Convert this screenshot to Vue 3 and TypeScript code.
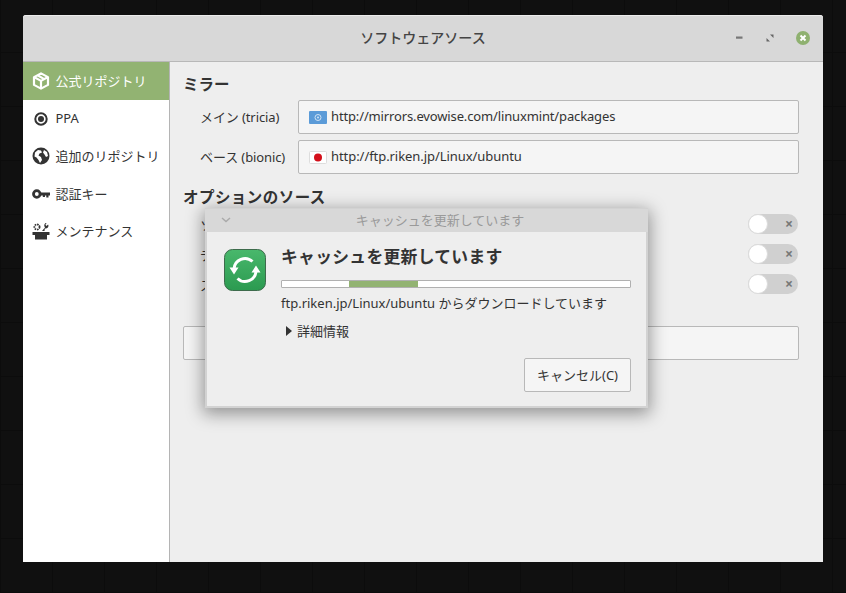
<script setup lang="ts">
const navItems = [
  { label: '公式リポジトリ', icon: 'box' },
  { label: 'PPA', icon: 'ppa' },
  { label: '追加のリポジトリ', icon: 'globe' },
  { label: '認証キー', icon: 'key' },
  { label: 'メンテナンス', icon: 'tools' }
]

const mirrors = [
  { label: 'メイン (tricia)', url: 'http://mirrors.evowise.com/linuxmint/packages', flag: 'un' },
  { label: 'ベース (bionic)', url: 'http://ftp.riken.jp/Linux/ubuntu', flag: 'jp' }
]

// labels run under the dialog, only their first letter shows
const options = ['ソースコード', 'デバッグ', 'ステージング']
</script>

<template>
  <div class="desktop">
    <div class="window">
      <header class="titlebar">
        <span class="title">ソフトウェアソース</span>
        <div class="controls">
          <svg width="10" height="10" viewBox="0 0 10 10"><rect x="2" y="3.500" width="6.500" height="2.200" fill="#777" /></svg>
          <svg width="10" height="10" viewBox="0 0 10 10"><path d="M5 1.500h3.500V5zM1.500 5L5 8.500H1.500z" fill="#666" /></svg>
          <svg width="14" height="14" viewBox="0 0 14 14">
            <circle cx="7" cy="7" r="7" fill="#8fb170" />
            <path d="M4.500 4.500l5 5M9.500 4.500l-5 5" stroke="#fff" stroke-width="2" />
          </svg>
        </div>
      </header>

      <div class="body">
        <nav class="sidebar">
          <div v-for="(item, i) in navItems" :key="item.label" class="nav-item" :class="{ active: i === 0 }">
            <svg class="nav-icon" viewBox="0 0 18 18">
              <g v-if="item.icon === 'box'" fill="none" stroke="currentColor" stroke-width="2.200" stroke-linejoin="round">
                <path d="M9 1.400l7 3.700v7.800l-7 3.700-7-3.700V5.100z" />
                <path d="M2.400 5.300L9 8.900l6.600-3.600M9 8.900v7.400M5.600 3.300l6.600 3.800" />
              </g>
              <g v-else-if="item.icon === 'ppa'">
                <circle cx="9" cy="9" r="5.700" fill="none" stroke="currentColor" stroke-width="2" />
                <circle cx="9" cy="9" r="3" fill="currentColor" />
              </g>
              <g v-else-if="item.icon === 'globe'">
                <circle cx="9" cy="9" r="8.500" fill="currentColor" />
                <path d="M3 5.500l3-2.500 3 .5 1 2-2.500 1-1 2 2.500 1.500 1 3-2 3-1.500-3-2-2.500-2-1zM12 3l3 2 1 4-2 1-1.500-2.500-1.500-2z" fill="#fff" />
              </g>
              <g v-else-if="item.icon === 'key'">
                <circle cx="4.800" cy="9" r="3.300" fill="none" stroke="currentColor" stroke-width="2.800" />
                <path d="M8 7.500h10v3h-1.500v2h-2.200v-2h-1.300v1.500h-2.200v-1.500H8z" fill="currentColor" />
              </g>
              <g v-else>
                <path d="M0.500 10h17v3h-2.500v4.500H3V13H0.500z" fill="currentColor" />
                <circle cx="5" cy="5" r="2.600" fill="none" stroke="currentColor" stroke-width="1.800" stroke-dasharray="1.600 .8" />
                <path d="M10 9l3-3.500a3 3 0 0 1 .6-4.500l1 .1-1.200 1.700 1 1.100 1.700-1.300.4 1.100a3.200 3.200 0 0 1-3.700 2.700L12.500 9z" fill="currentColor" />
              </g>
            </svg>
            <span>{{ item.label }}</span>
          </div>
        </nav>

        <main class="content">
          <h2 class="section-title">ミラー</h2>
          <div v-for="m in mirrors" :key="m.url" class="mirror-row">
            <span class="mirror-label">{{ m.label }}</span>
            <div class="entry">
              <svg v-if="m.flag === 'un'" class="flag" viewBox="0 0 18 13">
                <rect width="18" height="13" rx="1" fill="#5b9bd8" />
                <circle cx="9" cy="6.500" r="3" fill="none" stroke="#cfe2f4" stroke-width="1" />
                <circle cx="9" cy="6.500" r="1" fill="#cfe2f4" />
              </svg>
              <svg v-else class="flag" viewBox="0 0 18 13">
                <rect x=".5" y=".5" width="17" height="12" rx="1" fill="#fff" stroke="#ddd" />
                <circle cx="9" cy="6.500" r="4" fill="#d30f1a" />
              </svg>
              <span class="url" :class="m.flag">{{ m.url }}</span>
            </div>
          </div>

          <h2 class="section-title options-title">オプションのソース</h2>
          <div class="option-list">
            <div v-for="o in options" :key="o" class="option-row">
              <span>{{ o }}</span>
              <div class="toggle">
                <span class="knob"></span>
                <span class="toggle-x">×</span>
              </div>
            </div>
          </div>
          <div class="wide-button"></div>
        </main>
      </div>

      <section class="dialog">
        <div class="dialog-head">
          <svg class="chevron" width="10" height="6" viewBox="0 0 10 6"><path d="M1 1l4 3.500L9 1" fill="none" stroke="#aaa" stroke-width="1.500" /></svg>
          <span>キャッシュを更新しています</span>
        </div>
        <div class="dialog-body">
          <svg class="sync" width="42" height="42" viewBox="0 0 42 42">
            <defs>
              <linearGradient id="syncBg" x1="0" y1="0" x2="0" y2="1">
                <stop offset="0" stop-color="#49b86c" />
                <stop offset="1" stop-color="#2b9a50" />
              </linearGradient>
            </defs>
            <rect x=".5" y=".5" width="41" height="41" rx="8" fill="url(#syncBg)" stroke="#3d6b4c" />
            <path d="M10 20a11 11 0 0 1 18.500-7.500M32 22a11 11 0 0 1-18.500 7.500" fill="none" stroke="#fff" stroke-width="3" />
            <path d="M5.500 18.500h9L10 25.500zM27.500 23.500h9L32 16.500z" fill="#fff" />
          </svg>
          <div class="dialog-main">
            <h3 class="dialog-title">キャッシュを更新しています</h3>
            <div class="progress"><div class="progress-fill"></div></div>
            <p class="dialog-status">ftp.riken.jp/Linux/ubuntu からダウンロードしています</p>
            <div class="details">
              <svg width="6" height="10" viewBox="0 0 6 10"><path d="M0 0l6 5-6 5z" fill="#333" /></svg>
              <span>詳細情報</span>
            </div>
          </div>
        </div>
        <div class="dialog-actions">
          <button class="cancel" type="button"><span>キャンセル(C)</span></button>
        </div>
      </section>
    </div>
  </div>
</template>

<style>
html, body {
  margin: 0;
  background: #101010;
}
</style>

<style scoped>
.desktop {
  width: 846px;
  height: 593px;
  box-sizing: border-box;
  padding: 15px 23px 31px;
  overflow: hidden;
  background-color: #101010;
  background-image:
    repeating-linear-gradient(90deg, #0c0c0c 0 1px, transparent 1px 52px),
    repeating-linear-gradient(0deg, #0c0c0c 0 1px, transparent 1px 54px);
  font-family: "Noto Sans", "Noto Sans CJK JP", sans-serif;
  font-size: 13px;
  color: #333;
}

.window {
  position: relative;
  width: 800px;
  height: 547px;
  display: flex;
  flex-direction: column;
  background: #eeeeee;
  border-radius: 3px 3px 0 0;
}

.titlebar {
  height: 47px;
  flex: none;
  box-sizing: border-box;
  display: flex;
  align-items: center;
  justify-content: center;
  position: relative;
  background: #d8d8d8;
  border-top: 1px solid #ececec;
  border-bottom: 1px solid #b8b8b8;
  border-radius: 3px 3px 0 0;
}

.title {
  font-size: 14px;
  font-weight: 500;
  color: #444;
  margin-top: -3px;
}

.controls {
  position: absolute;
  right: 13px;
  top: 15px;
  display: flex;
  align-items: center;
  gap: 21px;
}

.body {
  flex: 1;
  display: flex;
  min-height: 0;
}

.sidebar {
  width: 147px;
  flex: none;
  box-sizing: border-box;
  background: #fff;
  border-right: 1px solid #b4b4b4;
}

.nav-item {
  height: 37.5px;
  display: flex;
  align-items: center;
  gap: 6px;
  padding-left: 9px;
  color: #333;
}

.nav-item.active {
  height: 38px;
  background: #92b372;
  color: #fff;
}

.nav-item span {
  margin-top: -1px;
}

.nav-icon {
  width: 18px;
  height: 18px;
  flex: none;
  margin-left: -0.5px;
}

.content {
  flex: 1;
  min-width: 0;
  box-sizing: border-box;
  padding: 11px 24px 0 13px;
}

.section-title {
  margin: 0;
  font-size: 15.5px;
  line-height: 22px;
  font-weight: 700;
  color: #333;
}

.mirror-row {
  display: flex;
  align-items: center;
  height: 34px;
  margin-top: 6px;
  padding-left: 17px;
}

.section-title + .mirror-row {
  margin-top: 5px;
}

.mirror-label {
  width: 98px;
  flex: none;
  margin-top: -2px;
  letter-spacing: -0.1px;
}

.entry {
  flex: 1;
  height: 34px;
  box-sizing: border-box;
  display: flex;
  align-items: center;
  gap: 4px;
  padding-left: 10px;
  background: #f5f5f5;
  border: 1px solid #b8b8b8;
  border-radius: 2px;
}

.url {
  letter-spacing: -0.14px;
  margin-top: -2px;
}

.url.jp {
  letter-spacing: -0.06px;
}

.flag {
  width: 18px;
  height: 13px;
  flex: none;
}

.options-title {
  margin-top: 12px;
  letter-spacing: 0.45px;
}

.option-list {
  margin-top: 6px;
}

.option-row {
  display: flex;
  align-items: center;
  justify-content: space-between;
  height: 20px;
  margin-bottom: 10px;
  padding-left: 17px;
  white-space: nowrap;
}

.toggle {
  position: relative;
  width: 50px;
  height: 20px;
  margin-right: 1px;
  border-radius: 10px;
  background: #d0d0d0;
}

.knob {
  position: absolute;
  left: 0;
  top: 0;
  width: 20px;
  height: 20px;
  box-sizing: border-box;
  border-radius: 50%;
  background: #fff;
  border: 1px solid #dcdcdc;
}

.toggle-x {
  position: absolute;
  right: 5px;
  top: 0;
  font-size: 14px;
  line-height: 20px;
  font-weight: 700;
  color: #777;
}

.wide-button {
  height: 34px;
  margin-top: 32px;
  box-sizing: border-box;
  background: #f5f5f5;
  border: 1px solid #b8b8b8;
  border-radius: 2px;
}

.dialog {
  position: absolute;
  left: 182px;
  top: 193px;
  width: 443px;
  height: 200px;
  box-sizing: border-box;
  display: flex;
  flex-direction: column;
  background: #eeeeee;
  border: 2px solid #d2d2d2;
  border-top-width: 1px;
  box-shadow: 0 4px 16px 2px rgba(0, 0, 0, 0.38);
}

.dialog-head {
  height: 23px;
  flex: none;
  position: relative;
  display: flex;
  align-items: center;
  justify-content: center;
  margin: 0 -2px;
  padding-left: 27px;
  background: #d8d8d8;
  color: #9a9a9a;
}

.dialog-head span {
  margin-top: -2px;
}

.chevron {
  position: absolute;
  left: 16px;
  top: 8px;
}

.dialog-body {
  display: flex;
  padding: 17px 15px 0 17px;
  gap: 15px;
}

.sync {
  flex: none;
}

.dialog-main {
  flex: 1;
  min-width: 0;
}

.dialog-title {
  margin: 0;
  font-size: 16.8px;
  line-height: 16px;
  font-weight: 700;
  letter-spacing: 0.3px;
  color: #333;
}

.progress {
  height: 8px;
  margin-top: 15px;
  box-sizing: border-box;
  background: #fff;
  border: 1px solid #b0b0b0;
  border-radius: 1px;
  overflow: hidden;
}

.progress-fill {
  width: 69px;
  height: 100%;
  margin-left: 67px;
  background: #92b372;
}

.dialog-status {
  margin: 6px 0 0;
  line-height: 18px;
  white-space: nowrap;
}

.details {
  display: flex;
  align-items: center;
  gap: 5px;
  margin-top: 10px;
  padding-left: 5px;
  line-height: 18px;
}

.dialog-actions {
  display: flex;
  justify-content: flex-end;
  margin-top: auto;
  padding: 0 15px 14px 0;
}

.cancel {
  width: 107px;
  height: 34px;
  padding: 0;
  font: inherit;
  color: #333;
  background: #f5f5f5;
  border: 1px solid #b8b8b8;
  border-radius: 2px;
}

.cancel span {
  position: relative;
  top: -1px;
}
</style>
